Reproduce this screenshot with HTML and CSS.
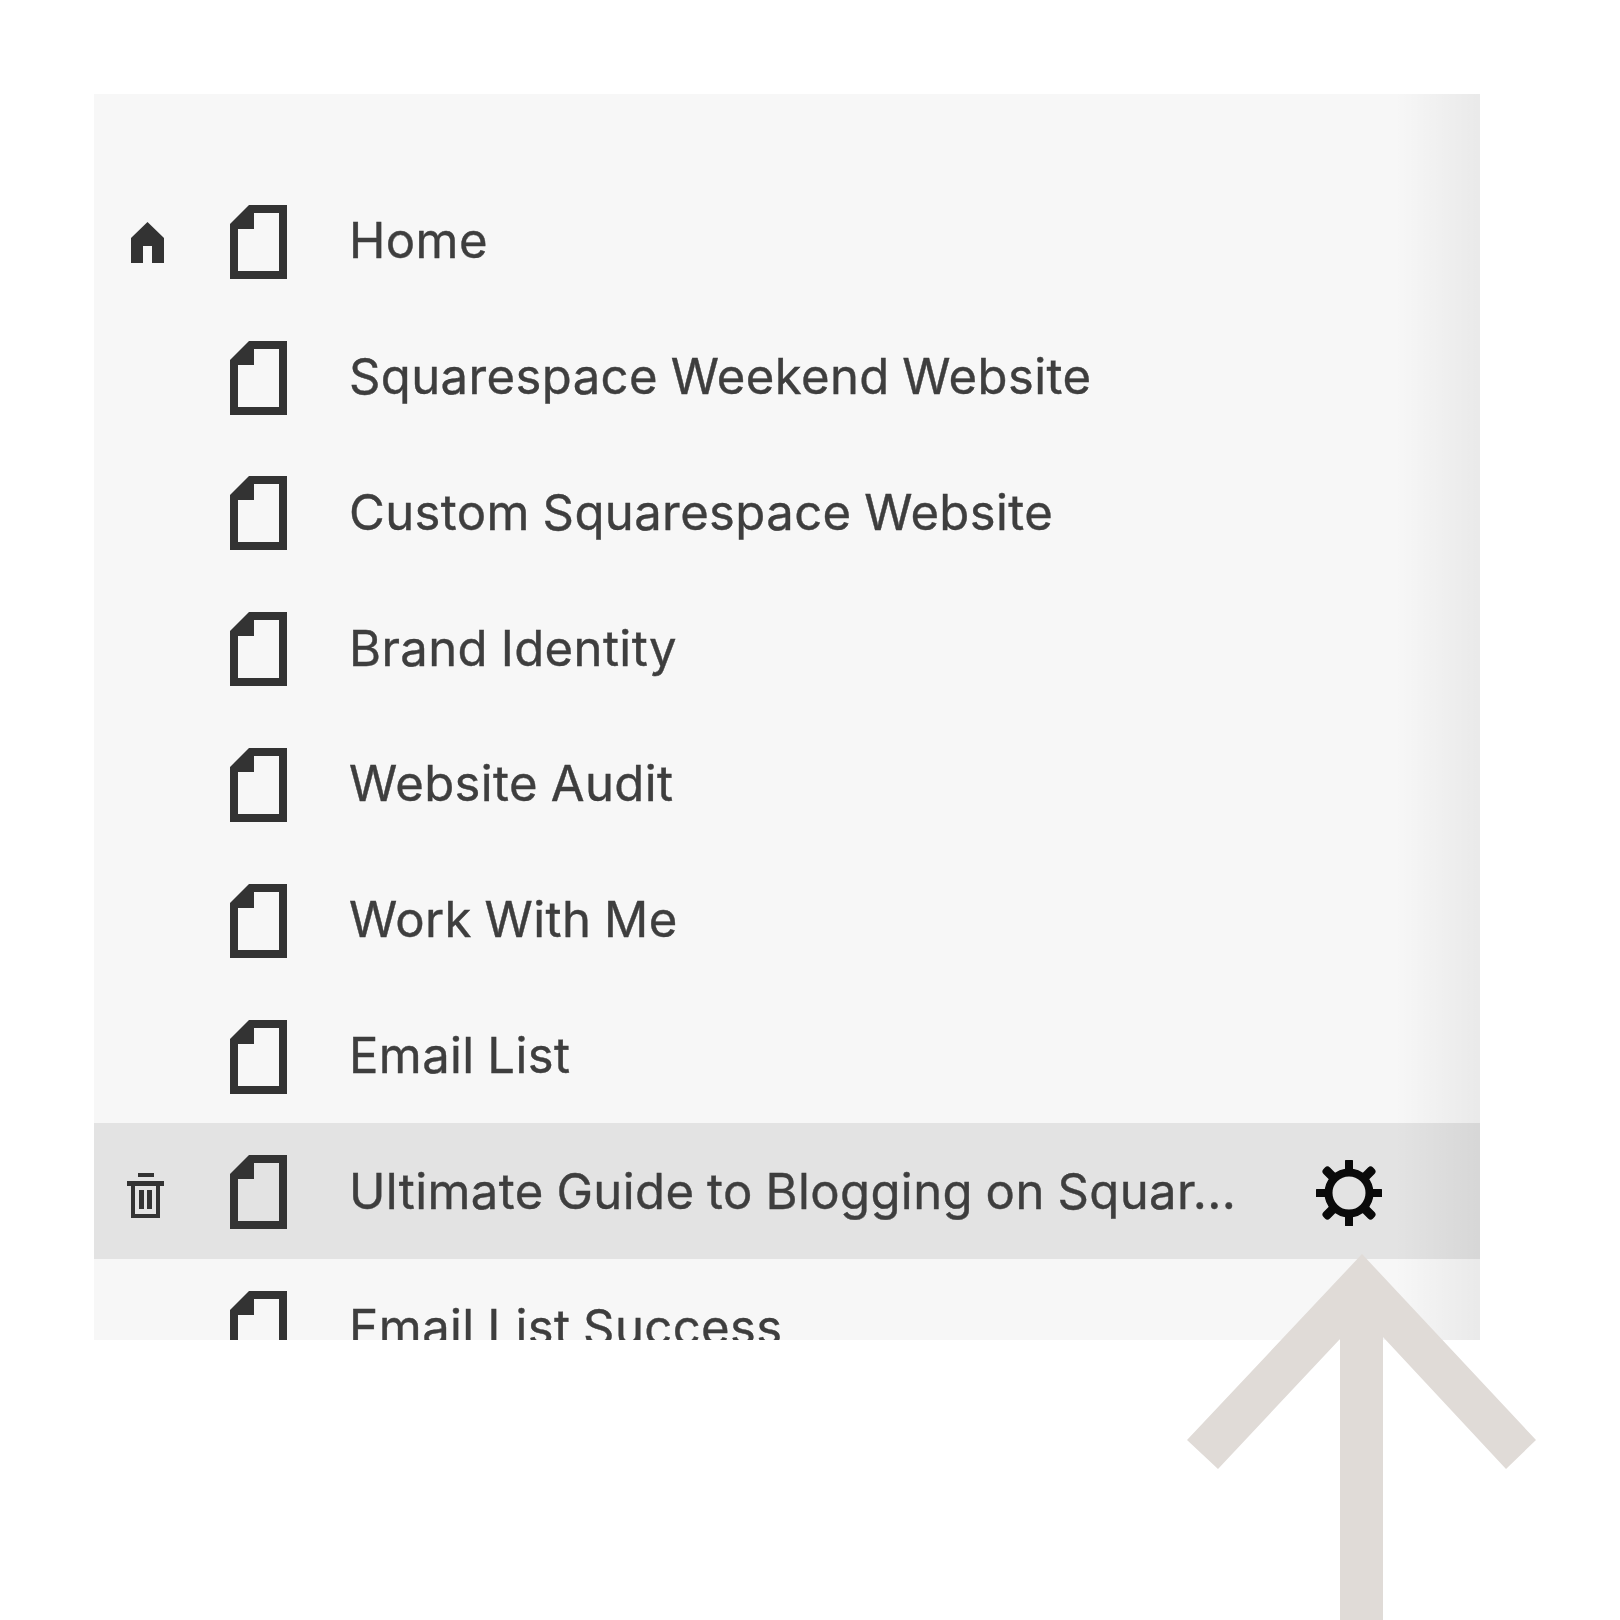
FILE: index.html
```html
<!DOCTYPE html>
<html lang="en">
<head>
<meta charset="utf-8">
<title>Pages</title>
<link rel="stylesheet" href="styles.css">
</head>
<body>
<svg width="0" height="0" class="defs" aria-hidden="true">
  <symbol id="doc" viewBox="0 0 57 74"><path fill="#333" fill-rule="evenodd" d="M19 0H57V74H0V19ZM24 8V24H8V66H49V8Z"/></symbol>
</svg>
<main class="panel">
  <ul class="list">
    <li class="row">
      <span class="lead"><svg class="home" viewBox="0 0 33 41"><path fill="#333" d="M16.5 0L33 16V41H21V24H12V41H0V16Z"/></svg></span>
      <svg class="doc"><use href="#doc"/></svg>
      <span class="label">Home</span>
    </li>
    <li class="row"><span class="lead"></span><svg class="doc"><use href="#doc"/></svg><span class="label">Squarespace Weekend Website</span></li>
    <li class="row"><span class="lead"></span><svg class="doc"><use href="#doc"/></svg><span class="label">Custom Squarespace Website</span></li>
    <li class="row"><span class="lead"></span><svg class="doc"><use href="#doc"/></svg><span class="label">Brand Identity</span></li>
    <li class="row"><span class="lead"></span><svg class="doc"><use href="#doc"/></svg><span class="label">Website Audit</span></li>
    <li class="row"><span class="lead"></span><svg class="doc"><use href="#doc"/></svg><span class="label">Work With Me</span></li>
    <li class="row"><span class="lead"></span><svg class="doc"><use href="#doc"/></svg><span class="label">Email List</span></li>
    <li class="row active">
      <span class="lead"><svg class="trash" viewBox="0 0 37 45"><path fill="#333" fill-rule="evenodd" d="M11 0H27V4H11ZM0 8H37V13H33V45H4V13H0ZM8 13V41H29V13ZM12 17H17V36H12ZM20 17H25V36H20Z"/></svg></span>
      <svg class="doc"><use href="#doc"/></svg>
      <span class="label">Ultimate Guide to Blogging on Squar...</span>
      <svg class="gear" viewBox="0 0 66 66">
        <g fill="#0a0a0a">
          <rect x="29" y="0" width="8" height="66" rx="0.5"/>
          <rect x="0" y="29" width="66" height="8" rx="0.5"/>
          <rect x="28.5" y="-2" width="9" height="70" rx="3.5" transform="rotate(45 33 33)"/>
          <rect x="28.5" y="-2" width="9" height="70" rx="3.5" transform="rotate(-45 33 33)"/>
        </g>
        <circle cx="33" cy="33" r="20.5" fill="#e3e3e3" stroke="#0a0a0a" stroke-width="8"/>
      </svg>
    </li>
    <li class="row"><span class="lead"></span><svg class="doc"><use href="#doc"/></svg><span class="label">Email List Success</span></li>
  </ul>
  <div class="shade" aria-hidden="true"></div>
</main>
<svg class="arrow" viewBox="0 0 349 366" aria-hidden="true">
  <path fill="#e0dbd7" d="M175 0L349 186L319 215L196 83V366H153V85L31 215L0 186Z"/>
</svg>
</body>
</html>
```

FILE: styles.css
```css
* { box-sizing: border-box; }

html, body {
  margin: 0;
  padding: 0;
  background: #fff;
}

body {
  position: relative;
  width: 1620px;
  height: 1620px;
  padding: 94px 140px 0 94px;
  overflow: hidden;
  font-family: Inter, "Liberation Sans", sans-serif;
}

.defs { position: absolute; }

.panel {
  position: relative;
  height: 1246px;
  overflow: hidden;
  background: #f7f7f7;
}

.list {
  list-style: none;
  margin: 0;
  padding: 78.4px 0 0;
}

.row {
  display: flex;
  align-items: center;
  height: 135.8px;
}

.row.active { background: #e3e3e3; }

.lead {
  display: flex;
  align-items: center;
  width: 136px;
  padding-left: 37px;
}

.home {
  width: 33px;
  height: 41px;
  margin-top: 4.4px;
}

.trash {
  width: 37px;
  height: 45px;
  margin-top: 8.5px;
  margin-left: -4px;
}

.doc {
  flex: none;
  width: 57px;
  height: 74px;
  margin-top: 3px;
}

.label {
  margin-top: 2px;
  margin-left: 62px;
  font-size: 49px;
  font-weight: 400;
  line-height: 60px;
  letter-spacing: 0.4px;
  word-spacing: -1.5px;
  -webkit-text-stroke: 0.4px #3e3e3e;
  color: #3e3e3e;
  white-space: nowrap;
}

.gear {
  flex: none;
  width: 66px;
  height: 66px;
  margin-top: 3.4px;
  margin-left: auto;
  margin-right: 98px;
}

.shade {
  position: absolute;
  top: 0;
  right: 0;
  bottom: 0;
  width: 85px;
  background: linear-gradient(to right, rgba(0, 0, 0, 0), rgba(0, 0, 0, 0.055));
}

.arrow {
  position: absolute;
  left: 1187px;
  top: 1254px;
  width: 349px;
  height: 366px;
}
```
